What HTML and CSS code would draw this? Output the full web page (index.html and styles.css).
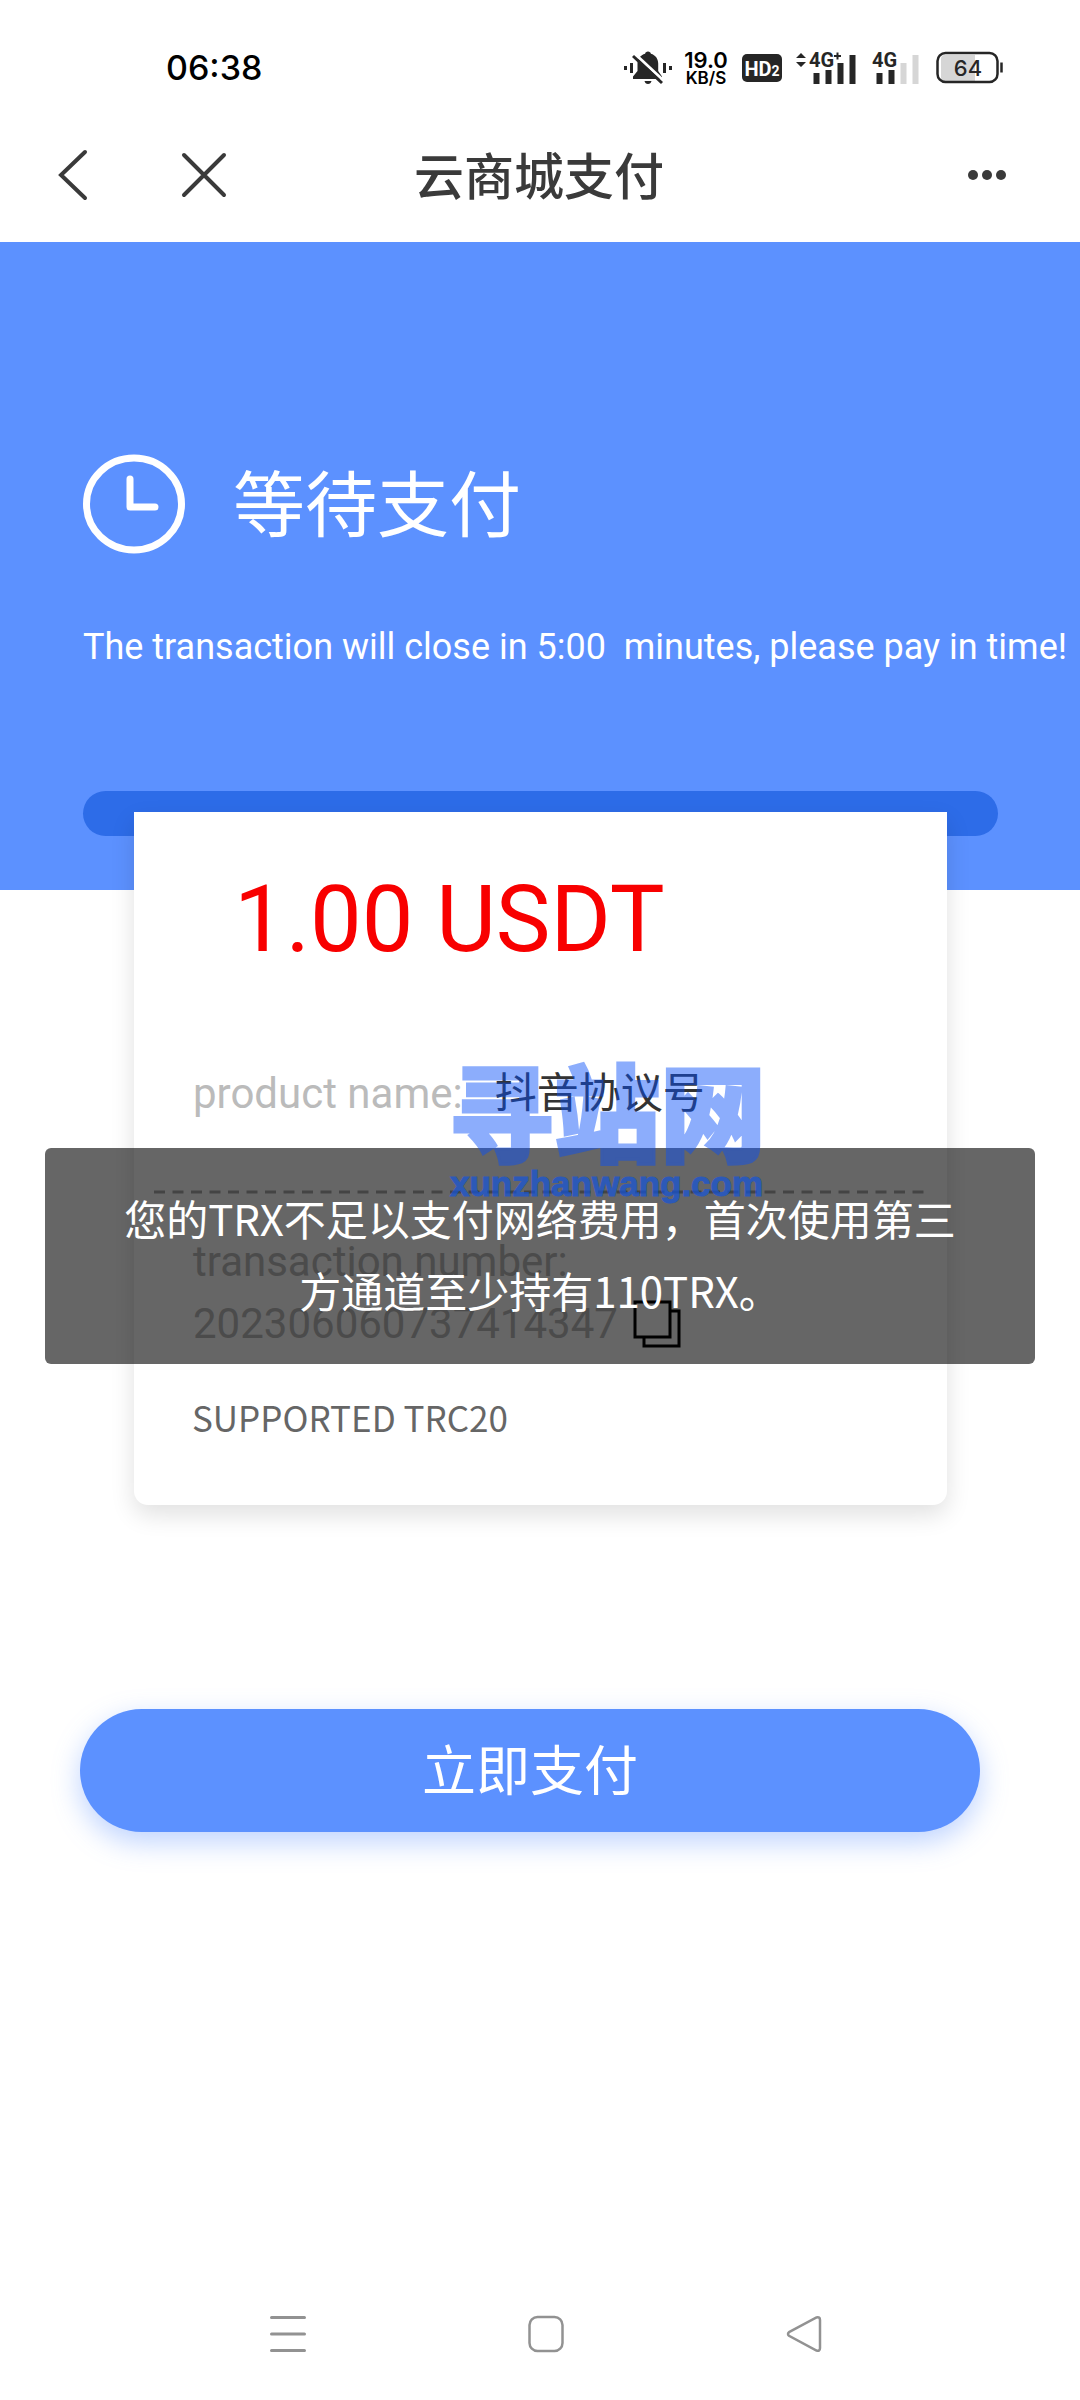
FILE: index.html
```html
<!DOCTYPE html>
<html lang="zh-CN">
<head>
<meta charset="utf-8">
<meta name="viewport" content="width=device-width, initial-scale=1">
<title>云商城支付</title>
<link rel="stylesheet" href="styles.css">
</head>
<body>
<div class="screen">
  <header class="status">
    <time class="clock">06:38</time>
    <div class="status-icons">
      <svg class="icon-bell" width="48" height="36" viewBox="0 0 48 36" aria-hidden="true">
        <path d="M24 1.500c1.600 0 2.700 1 2.900 2.200 4.600 1.300 7.300 5 7.300 9.800v7.500l3.800 5.500v2.500H9v-2.500l4.500-5.500v-7.500c0-4.800 3-8.500 7.600-9.800.2-1.200 1.300-2.200 2.900-2.200zM20.500 31h7c-.4 1.800-1.700 3-3.500 3s-3.100-1.200-3.500-3z" fill="#262626"/>
        <path d="M10 3l30 28" stroke="#fff" stroke-width="3"/>
        <path d="M9 6l29 27" stroke="#262626" stroke-width="3"/>
        <path d="M1.500 16v4M7.500 13v10M40.500 13v10M46.500 16v4" stroke="#262626" stroke-width="3"/>
      </svg>
      <div class="speed"><span class="speed-value">19.0</span><span class="speed-unit">KB/S</span></div>
      <div class="hd">HD<small>2</small></div>
      <svg class="icon-signal" width="60" height="36" viewBox="0 0 60 36" role="img" aria-label="4G+">
        <path d="M0 8l5-5 5 5zM0 12l5 5 5-5z" fill="#262626"/>
        <text x="13" y="17" class="net">4G</text>
        <path d="M38 6h7M41.500 2.500v7" stroke="#262626" stroke-width="2"/>
        <path d="M20.500 23v11M32.500 20v14M44.500 13v21M56.500 5v29" stroke="#262626" stroke-width="6"/>
      </svg>
      <svg class="icon-signal" width="48" height="36" viewBox="0 0 48 36" role="img" aria-label="4G">
        <text x="0" y="17" class="net">4G</text>
        <path d="M7.500 23v11M19.500 20v14" stroke="#262626" stroke-width="6"/>
        <path d="M31.500 13v21M43.500 5v29" stroke="#d6d6d6" stroke-width="6"/>
      </svg>
      <svg class="icon-battery" width="68" height="36" viewBox="0 0 68 36" role="img" aria-label="64%">
        <path d="M9 5h30v26H9a4 4 0 0 1-4-4V9a4 4 0 0 1 4-4z" fill="#d6d6d6"/>
        <rect x="1.500" y="3" width="60" height="29" rx="8" fill="none" stroke="#262626" stroke-width="2.500"/>
        <path d="M65.500 12.500v10" stroke="#262626" stroke-width="2.500"/>
        <text x="32" y="25.500" text-anchor="middle" class="charge">64</text>
      </svg>
    </div>
  </header>

  <nav class="titlebar">
    <div class="titlebar-side">
      <button class="icon-button" aria-label="返回">
        <svg width="32" height="52" viewBox="0 0 32 52"><path d="M28 3L4 26l24 23" fill="none" stroke="#3a3a3a" stroke-width="4" stroke-linecap="round"/></svg>
      </button>
      <button class="icon-button" aria-label="关闭">
        <svg width="48" height="48" viewBox="0 0 48 48"><path d="M4 4l40 40M44 4L4 44" stroke="#3a3a3a" stroke-width="4" stroke-linecap="round"/></svg>
      </button>
    </div>
    <h1 class="title">云商城支付</h1>
    <div class="titlebar-side titlebar-end">
      <button class="icon-button" aria-label="更多">
        <svg width="40" height="12" viewBox="0 0 40 12" fill="#3a3a3a"><circle cx="6" cy="6" r="5"/><circle cx="20" cy="6" r="5"/><circle cx="34" cy="6" r="5"/></svg>
      </button>
    </div>
  </nav>

  <main>
    <section class="hero">
      <div class="hero-head">
        <svg width="102" height="100" viewBox="0 0 102 100" fill="none" stroke="#fff" aria-hidden="true">
          <ellipse cx="51" cy="50" rx="47.500" ry="46" stroke-width="7"/>
          <path d="M47 25v28h25" stroke-width="7" stroke-linecap="round" stroke-linejoin="round"/>
        </svg>
        <h2 class="hero-title">等待支付</h2>
      </div>
      <p class="notice">The transaction will close in 5:00&nbsp; minutes, please pay in time!</p>
      <div class="slot"></div>
    </section>

    <section class="card">
      <p class="amount">1.00 USDT</p>
      <p class="product"><span class="label">product name:</span><span class="value">抖音协议号</span></p>
      <svg class="divider" height="4" aria-hidden="true"><line x1="0" y1="2" x2="100%" y2="2" stroke="#aaa" stroke-width="3" stroke-dasharray="11 7.500"/></svg>
      <p class="order">
        <span>transaction number:</span>
        <span class="order-row">202306060737414347
          <button class="icon-button" aria-label="复制">
            <svg width="48" height="48" viewBox="0 0 48 48" fill="none" stroke="#000" stroke-width="3"><path d="M2 2h35v35H2zM37 11h9v35H11v-9"/></svg>
          </button>
        </span>
      </p>
      <p class="support">SUPPORTED TRC20</p>
    </section>

    <button class="pay">立即支付</button>
  </main>

  <footer class="sysnav">
    <button class="icon-button" aria-label="最近任务">
      <svg width="36" height="38" viewBox="0 0 36 38"><path d="M1.500 2.500h33M1.500 19h33M1.500 35.500h33" stroke="#929292" stroke-width="3" stroke-linecap="round"/></svg>
    </button>
    <button class="icon-button" aria-label="主页">
      <svg width="36" height="38" viewBox="0 0 36 38"><rect x="1.500" y="2" width="33" height="34" rx="8" fill="none" stroke="#929292" stroke-width="2.500"/></svg>
    </button>
    <button class="icon-button" aria-label="返回上一级">
      <svg width="36" height="38" viewBox="0 0 36 38"><path d="M3 17.200L30.500 2.500q3.500-1 3.500 2.500v28q0 3.500-3.500 2.500L3 20.800q-2-1.800 0-3.600z" fill="none" stroke="#929292" stroke-width="2.500"/></svg>
    </button>
  </footer>

  <div class="toast" role="alert">您的TRX不足以支付网络费用，首次使用第三方通道至少持有110TRX。</div>
  <div class="watermark" aria-hidden="true"><span class="mark-name">寻站网</span><span class="mark-url">xunzhanwang.com</span></div>
</div>
</body>
</html>
```

FILE: styles.css
```css
* { box-sizing: border-box; }

body {
  margin: 0;
  background: #fff;
  color: #333;
  font-family: "Noto Sans CJK SC", sans-serif;
}

h1, h2, p { margin: 0; font-weight: 400; }

button {
  border: 0;
  background: none;
  padding: 0;
  font: inherit;
  color: inherit;
}

svg { display: block; flex: none; overflow: visible; }

.icon-button { display: block; flex: none; }

.screen {
  position: relative;
  display: flex;
  flex-direction: column;
  min-height: 100vh;
  overflow: hidden;
}

/* status bar */
.status {
  display: flex;
  align-items: center;
  justify-content: space-between;
  height: 136px;
  padding: 0 76px 0 166px;
  color: #000;
  font-family: Inter, "Noto Sans CJK SC", sans-serif;
}

.clock { font-size: 34px; line-height: 48px; font-weight: 500; }

.status-icons { display: flex; align-items: center; }
.speed {
  display: flex;
  flex-direction: column;
  width: 48px;
  margin: 0 12px 0 10px;
  text-align: center;
  font-weight: 600;
}
.speed-value { font-size: 22px; line-height: 20px; }
.speed-unit { font-size: 17px; line-height: 16px; }
.hd {
  width: 40px;
  height: 28px;
  margin-right: 14px;
  border-radius: 5px;
  background: #262626;
  color: #fff;
  font: 700 20px/30px Roboto, sans-serif;
  text-align: center;
}
.hd small { font-size: 14px; }
.icon-signal { margin-right: 16px; }
.net { font: 700 20px Roboto, sans-serif; fill: #262626; }
.charge { font: 500 22px Inter, sans-serif; fill: #262626; }

/* title bar */
.titlebar {
  display: flex;
  align-items: center;
  height: 106px;
  padding: 0 73px 28px 57px;
  color: #3a3a3a;
}
.titlebar-side { display: flex; flex: 1; align-items: center; gap: 91px; }
.titlebar-end { justify-content: flex-end; }
.title { padding: 0 0 4px 14px; font-size: 50px; line-height: 72px; font-weight: 500; }

/* blue banner */
.hero {
  padding: 212px 82px 54px 83px;
  background: #5c91ff;
  color: #fff;
}
.hero-head { display: flex; align-items: center; gap: 48px; }
.hero-title { padding-bottom: 8px; font-size: 72px; line-height: 92px; }
.notice {
  margin: 69px -82px 120px 0;
  font: 36px/48px Roboto, sans-serif;
  white-space: nowrap;
}
.slot { height: 45px; border-radius: 23px; background: #2d6ce8; }

/* payment card */
.card {
  position: relative;
  margin: -78px 133px 0 134px;
  padding: 48px 58px 56px;
  border-radius: 0 0 14px 14px;
  background: #fff;
  box-shadow: 0 10px 24px rgba(0, 0, 0, 0.12);
}
.amount {
  padding-left: 42px;
  color: #f80000;
  font: 400 92px/120px Roboto, sans-serif;
}
.product {
  display: flex;
  align-items: baseline;
  gap: 32px;
  height: 80px;
  margin-top: 70px;
  padding-left: 1px;
  font-size: 42px;
  line-height: 80px;
}
.label, .order { color: #bbb; font-family: Roboto, sans-serif; }
.divider { width: calc(100% + 80px); margin: 60px -38px 37px; }
.order {
  display: flex;
  flex-direction: column;
  padding-left: 1px;
  font-size: 42px;
  line-height: 62px;
}
.order-row { display: flex; align-items: center; gap: 15px; }
.support {
  margin-top: 30px;
  color: #666;
  font-size: 35px;
  line-height: 64px;
}

.pay {
  display: block;
  width: calc(100% - 180px);
  height: 123px;
  margin: 204px 100px 80px 80px;
  padding-bottom: 6px;
  border-radius: 62px;
  background: #5c91ff;
  box-shadow: 0 10px 28px rgba(92, 145, 255, 0.4);
  color: #fff;
  font-size: 54px;
  line-height: 72px;
}

/* system navigation */
.sysnav {
  display: flex;
  justify-content: center;
  gap: 222px;
  margin-top: auto;
  padding: 0 0 47px 12px;
}

/* overlays */
.toast {
  position: absolute;
  top: 1148px;
  left: 45px;
  right: 45px;
  padding: 34px 78px 38px;
  border-radius: 6px;
  background: rgba(0, 0, 0, 0.6);
  color: #fff;
  font-size: 42px;
  line-height: 72px;
  text-align: center;
}
.watermark {
  position: absolute;
  top: 1054px;
  left: 448px;
  display: flex;
  flex-direction: column;
  pointer-events: none;
}
.mark-name {
  color: #074ffa;
  font-size: 106px;
  line-height: 108px;
  font-weight: 900;
  -webkit-text-stroke: 3px #074ffa;
  opacity: 0.46;
}
.mark-url {
  padding-left: 2px;
  color: #1454dc;
  font: 700 35px/44px "Liberation Sans", sans-serif;
  -webkit-text-stroke: 1px #1454dc;
  opacity: 0.7;
}
```
